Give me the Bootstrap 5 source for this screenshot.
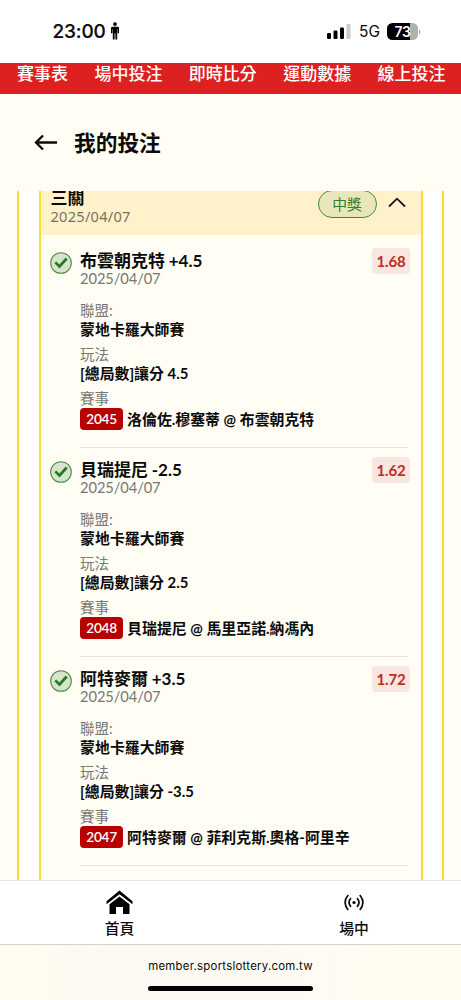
<!DOCTYPE html>
<html lang="zh-Hant">
<head>
<meta charset="utf-8">
<meta name="viewport" content="width=device-width, initial-scale=1">
<title>我的投注</title>
<link href="https://cdn.jsdelivr.net/npm/bootstrap@5.3.0/dist/css/bootstrap.min.css" rel="stylesheet">
<style>
  body { width: 461px; height: 1000px; overflow: hidden; background: #fffdf4; color: #0b0b0b; font-family: Lato, "Noto Sans CJK TC", sans-serif; white-space: nowrap; }
  svg { display: block; flex: none; }
  .status-bar { height: 63px; background: #fff; padding: 0 40px 0 52.5px; font-family: Inter, sans-serif; }
  .clock { font-size: 19px; font-weight: 500; line-height: 63px; letter-spacing: -.15px; -webkit-text-stroke: .2px; }
  .person { margin: 0 0 1px 4px; }
  .net { font-size: 15.5px; line-height: 63px; margin: 0 7px 0 8px; }
  .battery { width: 31px; height: 17px; border-radius: 5.5px; background: linear-gradient(90deg, #000 73%, #b0b0b0 73%); color: #fff; font-size: 14px; font-weight: 600; line-height: 17px; text-align: center; letter-spacing: -.3px; }
  .top-menu { height: 31px; margin-bottom: 1px; background: #dd2020; padding-left: 17px; gap: 26.4px; font-size: 17px; font-weight: 500; line-height: 21px; }
  .top-menu a { color: #fff; text-decoration: none; }
  .page-title { height: 96px; padding: 0 0 1px 34px; gap: 16px; font-size: 21.7px; }
  .page-title h1 { font-size: inherit; font-weight: 600; line-height: 30px; }
  .scroll { height: 689px; overflow: hidden; padding: 0 17px; }
  .outer { height: 700px; border: solid #fddc32; border-width: 0 2px; background: #fff; padding: 0 19.5px; }
  .ticket { height: 700px; border: solid #fddc32; border-width: 0 2px; background: #fffdf4; }
  .ticket-head { height: 44px; background: #fff2ca; padding: 0 15px 0 10px; }
  .head-name { font-size: 17px; font-weight: 600; line-height: 20px; margin-top: -3px; }
  .head-date { font-family: "Noto Sans", sans-serif; font-size: 14.6px; line-height: 16px; color: #77725f; letter-spacing: .25px; }
  .won { width: 59px; height: 28px; margin-top: -1px; border: 1.3px solid #448a3a; border-radius: 14px; background: #e9e7b9; color: #347d2a; font-size: 14.8px; line-height: 26px; text-align: center; }
  .leg { height: 209px; margin: 0 12px 0 9px; gap: 8.6px; }
  .leg-first { margin-top: 4px; }
  .leg-body { border-bottom: 1px solid #e7e3dc; padding-top: 12px; width: 327.5px; position: relative; }
  .leg-name { font-size: 17px; font-weight: 700; line-height: 20px; word-spacing: -.5px; }
  .leg-date { font-size: 14.7px; line-height: 15px; color: #777; margin-bottom: 16px; letter-spacing: -.1px; }
  .key { font-size: 14.5px; line-height: 18px; color: #777; }
  .val { font-size: 14.9px; font-weight: 700; line-height: 18px; margin-bottom: 8px; }
  .game { font-size: 14.9px; font-weight: 700; line-height: 23px; gap: 4px; }
  .code { width: 43px; height: 22px; border-radius: 4px; background: #b80000; color: #fff; font-size: 13.7px; font-weight: 600; line-height: 22px; letter-spacing: -.3px; text-align: center; }
  .odds { position: absolute; right: -2.5px; top: 9px; width: 38px; height: 26px; border-radius: 4px; background: #f8e7e0; color: #bd2c24; font-size: 15px; font-weight: 700; line-height: 27px; letter-spacing: -.15px; text-align: center; }
  .tabs { height: 65px; background: #fff; border-top: 1px solid #e5e5e2; border-bottom: 1px solid #d2d2d2; font-size: 14.8px; font-weight: 500; line-height: 22px; }
  .tab-home { width: 239px; }
  .tab-live { width: 222px; padding-left: 8px; }
  .tab-icon { height: 27px; margin-top: 9px; }
  .address { height: 55px; background: linear-gradient(90deg, #fffdf0, #fbf9f1 25%, #fbf9f2 55%, #fffdf1 85%); font-family: Inter, sans-serif; font-size: 11.4px; line-height: 16px; padding-top: 13px; letter-spacing: .25px; }
  .home-bar { width: 165px; height: 5px; border-radius: 3px; background: #000; margin-top: 12px; }
</style>
</head>
<body>
<svg width="0" height="0" class="position-absolute" aria-hidden="true">
  <symbol id="tick" viewBox="0 0 22 22">
    <circle cx="11" cy="11" r="10.3" fill="#d7e4cc" stroke="#4e8d42" stroke-width="1.1"/>
    <path d="M5.3 10.4l4.2 4.1 7.2-8" fill="none" stroke="#287a22" stroke-width="2.7"/>
  </symbol>
</svg>

<header class="status-bar d-flex align-items-center">
  <span class="clock">23:00</span>
  <svg class="person" width="10" height="18" viewBox="0 0 10 18"><circle cx="5" cy="2.1" r="1.9"/><path d="M2.3 4.7h5.4Q9 4.7 9 6v5.3H7.6V7.2h-.4V17.5H5.4v-6h-.8v6H2.8V7.2h-.4v4.1H1V6q0-1.3 1.3-1.3z"/></svg>
  <svg class="ms-auto" width="24" height="15" viewBox="0 0 24 15"><rect y="9" width="4" height="6" rx="1.2"/><rect x="6.5" y="6.5" width="4" height="8.5" rx="1.2"/><rect x="13" y="3.5" width="4" height="11.5" rx="1.2"/><rect x="19.5" width="4" height="15" rx="1.2" fill="#ccc"/></svg>
  <span class="net">5G</span>
  <span class="battery">73</span>
  <svg width="3" height="6" viewBox="0 0 3 6"><path d="M1 .5Q2.6 1.2 2.6 3T1 5.5z" fill="#b0b0b0"/></svg>
</header>

<nav class="top-menu d-flex">
  <a href="#">賽事表</a><a href="#">場中投注</a><a href="#">即時比分</a><a href="#">運動數據</a><a href="#">線上投注</a>
</nav>

<div class="page-title d-flex align-items-center">
  <svg width="24" height="17" viewBox="0 0 24 17" fill="none" stroke="#0b0b0b" stroke-width="2.3"><path d="M23 8.5H2M9 1.5l-7 7 7 7"/></svg>
  <h1 class="m-0">我的投注</h1>
</div>

<main class="scroll">
  <div class="outer">
    <section class="ticket">
      <div class="ticket-head d-flex">
        <div><div class="head-name">三關</div><div class="head-date">2025/04/07</div></div>
        <div class="won ms-auto">中獎</div>
        <svg style="margin:6px 0 0 11px" width="18" height="11" viewBox="0 0 18 11" fill="none" stroke="#171717" stroke-width="1.8"><path d="M1 9.5L9 1.7l8 7.8"/></svg>
      </div>

      <article class="leg leg-first d-flex">
        <svg width="22" height="22" style="margin-top:13px"><use href="#tick"/></svg>
        <div class="leg-body">
          <div class="leg-name">布雲朝克特 +4.5</div><div class="leg-date">2025/04/07</div>
          <div class="key">聯盟:</div><div class="val">蒙地卡羅大師賽</div>
          <div class="key">玩法</div><div class="val">[總局數]讓分 4.5</div>
          <div class="key">賽事</div>
          <div class="game d-flex"><span class="code">2045</span><span>洛倫佐.穆塞蒂 @ 布雲朝克特</span></div>
          <span class="odds">1.68</span>
        </div>
      </article>
      <article class="leg d-flex">
        <svg width="22" height="22" style="margin-top:13px"><use href="#tick"/></svg>
        <div class="leg-body">
          <div class="leg-name">貝瑞提尼 -2.5</div><div class="leg-date">2025/04/07</div>
          <div class="key">聯盟:</div><div class="val">蒙地卡羅大師賽</div>
          <div class="key">玩法</div><div class="val">[總局數]讓分 2.5</div>
          <div class="key">賽事</div>
          <div class="game d-flex"><span class="code">2048</span><span>貝瑞提尼 @ 馬里亞諾.納馮內</span></div>
          <span class="odds">1.62</span>
        </div>
      </article>
      <article class="leg d-flex">
        <svg width="22" height="22" style="margin-top:13px"><use href="#tick"/></svg>
        <div class="leg-body">
          <div class="leg-name">阿特麥爾 +3.5</div><div class="leg-date">2025/04/07</div>
          <div class="key">聯盟:</div><div class="val">蒙地卡羅大師賽</div>
          <div class="key">玩法</div><div class="val">[總局數]讓分 -3.5</div>
          <div class="key">賽事</div>
          <div class="game d-flex"><span class="code">2047</span><span>阿特麥爾 @ 菲利克斯.奧格-阿里辛</span></div>
          <span class="odds">1.72</span>
        </div>
      </article>
    </section>
  </div>
</main>

<nav class="tabs d-flex">
  <div class="tab-home d-flex flex-column align-items-center">
    <div class="tab-icon"><svg width="27" height="25" viewBox="0 0 27 25"><path d="M.5 11.2L13.5.5l13 10.7v3.1L13.5 4.2.5 14.3z"/><path d="M3.5 14.2l10-7.6 10 7.6V24H17v-7h-7v7H3.5z"/></svg></div>
    <div>首頁</div>
  </div>
  <div class="tab-live d-flex flex-column align-items-center">
    <div class="tab-icon"><svg style="margin-top:4px" width="22" height="17" viewBox="0 0 22 17" fill="none" stroke="#0b0b0b" stroke-width="1.7"><circle cx="11" cy="8.5" r="1.6" fill="#0b0b0b" stroke="none"/><path d="M5.2 1Q-1 8.5 5.2 16M16.8 1Q23 8.5 16.8 16M8 4.2Q4 8.5 8 12.8M14 4.2Q18 8.5 14 12.8"/></svg></div>
    <div>場中</div>
  </div>
</nav>
<footer class="address d-flex flex-column align-items-center">
  <span>member.sportslottery.com.tw</span>
  <div class="home-bar"></div>
</footer>
<script src="https://cdn.jsdelivr.net/npm/bootstrap@5.3.0/dist/js/bootstrap.bundle.min.js"></script>
</body>
</html>
